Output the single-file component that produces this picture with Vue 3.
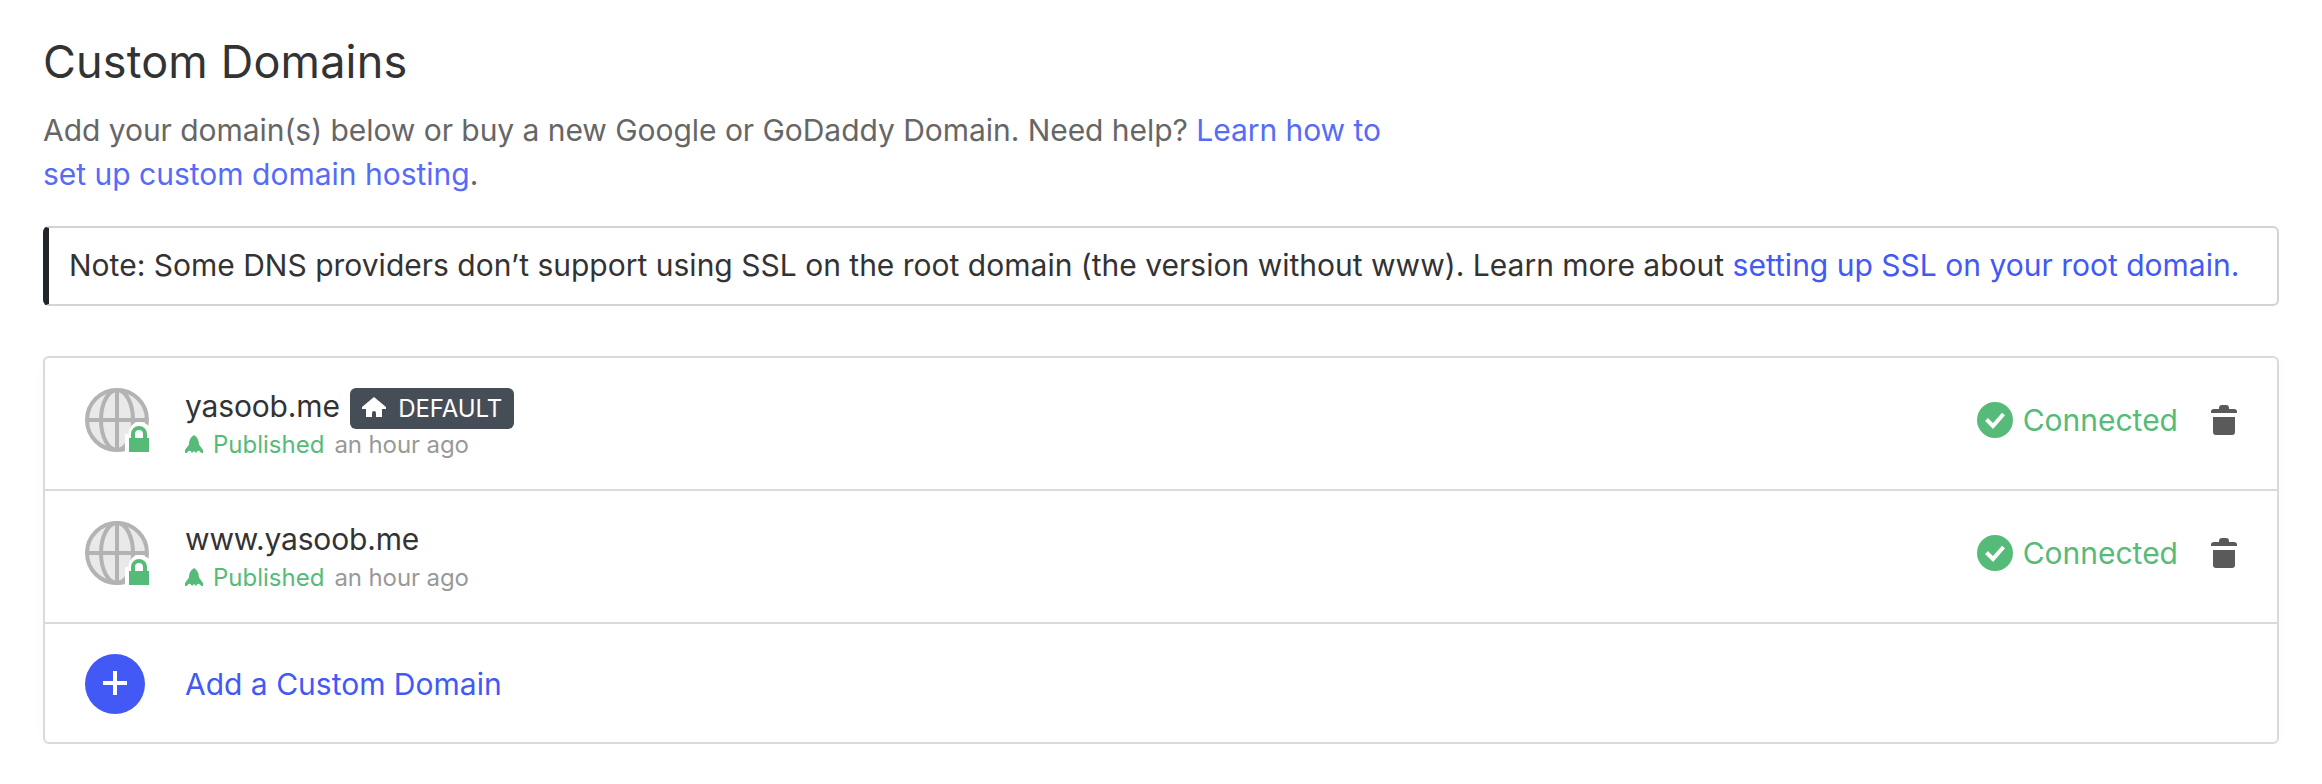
<script setup>
const domains = [
  { name: 'yasoob.me', isDefault: true, published: 'an hour ago' },
  { name: 'www.yasoob.me', isDefault: false, published: 'an hour ago' },
]
</script>

<template>
  <main class="page">
    <h1 class="title">Custom Domains</h1>
    <p class="intro">Add your domain(s) below or buy a new Google or GoDaddy Domain. Need help? <a>Learn how to<br><span class="wide">set up custom domain hosting</span></a>.</p>
    <div class="note"><span>Note: Some DNS providers don’t support using SSL on the root domain (the version without www). Learn more about <a>setting up SSL on your root domain.</a></span></div>
    <section class="list">
      <div v-for="d in domains" :key="d.name" class="row">
        <svg class="globe" viewBox="0 0 64 64">
          <circle cx="32" cy="32" r="30" fill="#e9e9e9" />
          <g fill="none" stroke="#b3b3b3" stroke-width="4">
            <circle cx="32" cy="32" r="30" />
            <ellipse cx="32" cy="32" rx="16" ry="30" />
            <path d="M32 2v60M2 32h60" />
          </g>
          <path d="M40 66V46h3.500C44 38 49 34 54 34s9 2.500 11 5v27z" fill="#fff" />
          <path d="M44 50h20v14H44z" fill="#56bb78" />
          <path d="M48 51v-5a6 6 0 0 1 12 0v5" fill="none" stroke="#56bb78" stroke-width="4" />
        </svg>
        <div class="info">
          <div class="name-line">
            <span class="name">{{ d.name }}</span>
            <span v-if="d.isDefault" class="badge">
              <svg viewBox="0 0 24 20"><path d="M12 0L24 10v2h-4v8h-6v-4a2 2 0 0 0-4 0v4H4v-8H0v-2z" fill="#fff" /></svg>
              <span>DEFAULT</span>
            </span>
          </div>
          <div class="sub">
            <svg viewBox="0 0 18 18"><path d="M9 0C11.500 1.500 14 4.500 14 9.500L18 15v3h-1.500L14 15.700 12.500 16 11 18 9 16 7 18 5.500 16 4 15.700 1.500 18H0v-3l4-5.500C4 4.500 6.500 1.500 9 0z" fill="#56bb78" /></svg>
            <span class="published">Published</span>
            <span class="when">{{ d.published }}</span>
          </div>
        </div>
        <div class="status">
          <svg class="check" viewBox="0 0 36 36"><circle cx="18" cy="18" r="18" fill="#56bb78" /><path d="M9.500 17.500l6.500 6.500L26.500 12" fill="none" stroke="#fff" stroke-width="4" /></svg>
          <span class="connected">Connected</span>
          <svg class="trash" viewBox="0 0 26 30"><path d="M0 8V6.500Q0 4 3 4h5V3q0-3 3-3h4q3 0 3 3v1h5q3 0 3 2.500V8zM2 12h22v15q0 3-3 3H5q-3 0-3-3z" fill="#5a5a5a" /></svg>
        </div>
      </div>
      <div class="row add">
        <svg class="plus" viewBox="0 0 60 60"><circle cx="30" cy="30" r="30" fill="#4259f6" /><path d="M30 17v24M18 29h24" stroke="#fff" stroke-width="4" /></svg>
        <a>Add a Custom Domain</a>
      </div>
    </section>
  </main>
</template>

<style>
body { margin: 0; background: #fff; }
</style>
<style scoped>
.page { box-sizing: border-box; padding: 32px 43px 0; font: 400 30px/44px Inter, sans-serif; color: #333; white-space: nowrap; }
.title { margin: 0; font-size: 45px; font-weight: 400; line-height: 60px; letter-spacing: .17px; }
.intro { margin: 16px 0 30px; color: #666; letter-spacing: -.043px; }
a { color: #4259f6; }
.intro a { color: #566bf8; }
.intro .wide { letter-spacing: 0; }
.note { box-sizing: border-box; height: 80px; border: 2px solid #d3d3d3; border-left: 6px solid #22262b; border-radius: 6px; padding-left: 20px; line-height: 74px; letter-spacing: .007px; }
.list { margin-top: 50px; border: 2px solid #dadada; border-radius: 6px; box-shadow: 0 0 16px rgba(0, 0, 0, .02); }
.row { display: flex; box-sizing: border-box; height: 133px; padding: 30px 40px 0; border-bottom: 2px solid #dadada; }
.globe { width: 64px; height: 64px; flex: none; }
.info { margin-left: 36px; flex: 1; }
.name-line { display: flex; height: 41px; line-height: 36px; }
.name { letter-spacing: -.16px; }
.badge { display: flex; align-items: flex-start; box-sizing: border-box; margin-left: 10.500px; width: 164px; height: 41px; padding: 9px 0 0 12px; background: #454d57; border-radius: 6px; color: #fff; font-size: 24px; line-height: 24px; letter-spacing: -.08px; }
.badge svg { width: 24px; height: 20px; margin-right: 12px; }
.sub { display: flex; font-size: 24px; line-height: 32px; }
.sub svg { width: 18px; height: 18px; margin: 6px 10px 0 0; }
.published { color: #56bb78; }
.when { margin-left: 10px; color: #999; letter-spacing: -.1px; }
.status { display: flex; align-items: flex-start; padding-top: 14px; }
.check { width: 36px; height: 36px; margin-right: 10px; }
.connected { color: #56bb78; line-height: 36px; }
.trash { width: 26px; height: 30px; margin: 3px 0 0 33px; }
.add { height: 118px; border-bottom: 0; }
.plus { width: 60px; height: 60px; margin-right: 40px; }
.add a { line-height: 60px; }
</style>
